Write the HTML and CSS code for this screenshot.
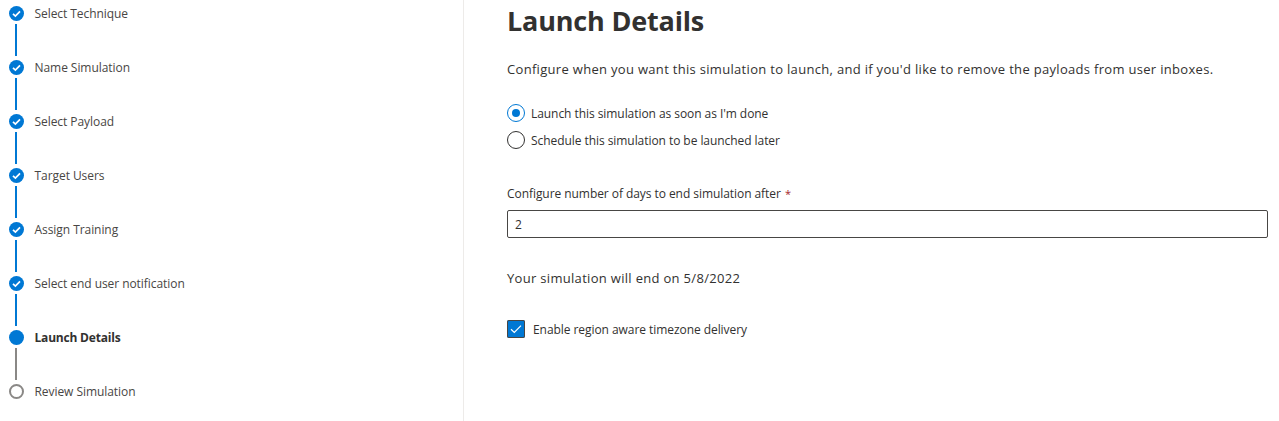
FILE: index.html
```html
<!DOCTYPE html>
<html lang="en">
<head>
<meta charset="utf-8">
<title>Launch Details</title>
<link rel="stylesheet" href="styles.css">
</head>
<body>
<div class="page">
  <nav class="steps">
    <div class="step done"><span class="dot"><svg viewBox="0 0 15 15" width="15" height="15"><path d="M4 7.8l2.4 2.3L11 5.3" fill="none" stroke="#fff" stroke-width="1.7"/></svg></span><span class="label">Select Technique</span></div>
    <div class="line"></div>
    <div class="step done"><span class="dot"><svg viewBox="0 0 15 15" width="15" height="15"><path d="M4 7.8l2.4 2.3L11 5.3" fill="none" stroke="#fff" stroke-width="1.7"/></svg></span><span class="label">Name Simulation</span></div>
    <div class="line"></div>
    <div class="step done"><span class="dot"><svg viewBox="0 0 15 15" width="15" height="15"><path d="M4 7.8l2.4 2.3L11 5.3" fill="none" stroke="#fff" stroke-width="1.7"/></svg></span><span class="label">Select Payload</span></div>
    <div class="line"></div>
    <div class="step done"><span class="dot"><svg viewBox="0 0 15 15" width="15" height="15"><path d="M4 7.8l2.4 2.3L11 5.3" fill="none" stroke="#fff" stroke-width="1.7"/></svg></span><span class="label">Target Users</span></div>
    <div class="line"></div>
    <div class="step done"><span class="dot"><svg viewBox="0 0 15 15" width="15" height="15"><path d="M4 7.8l2.4 2.3L11 5.3" fill="none" stroke="#fff" stroke-width="1.7"/></svg></span><span class="label">Assign Training</span></div>
    <div class="line"></div>
    <div class="step done"><span class="dot"><svg viewBox="0 0 15 15" width="15" height="15"><path d="M4 7.8l2.4 2.3L11 5.3" fill="none" stroke="#fff" stroke-width="1.7"/></svg></span><span class="label">Select end user notification</span></div>
    <div class="line"></div>
    <div class="step current"><span class="dot"></span><span class="label">Launch Details</span></div>
    <div class="line pending"></div>
    <div class="step todo"><span class="dot"></span><span class="label">Review Simulation</span></div>
  </nav>
  <main class="content">
    <h1 class="title">Launch Details</h1>
    <p class="intro">Configure when you want this simulation to launch, and if you'd like to remove the payloads from user inboxes.</p>
    <div class="radios">
      <div class="radio on"><span class="ring"></span><span>Launch this simulation as soon as I'm done</span></div>
      <div class="radio"><span class="ring"></span><span>Schedule this simulation to be launched later</span></div>
    </div>
    <div class="field-label">Configure number of days to end simulation after <span class="req">*</span></div>
    <div class="input">2</div>
    <p class="end">Your simulation will end on 5/8/2022</p>
    <div class="check"><span class="box"><svg viewBox="0 0 18 18" width="18" height="18"><path d="M4 9.3l3.3 3.2L14 5.6" fill="none" stroke="#fff" stroke-width="1.2"/></svg></span><span>Enable region aware timezone delivery</span></div>
  </main>
</div>
</body>
</html>
```
FILE: styles.css
```css
html, body { margin: 0; padding: 0; background: #fff; }
body { font-family: "Open Sans", "Noto Sans", sans-serif; color: #323130; font-size: 12px; letter-spacing: -0.06px; overflow: hidden; }
.page { display: flex; height: 421px; }
.steps { width: 464px; box-sizing: border-box; padding: 6px 0 0 9px; border-right: 1px solid #edebe9; flex: none; }
.step { display: flex; align-items: center; height: 15px; gap: 10.5px; }
.dot { width: 15px; height: 15px; border-radius: 50%; flex: none; box-sizing: border-box; display: block; }
.dot svg { display: block; }
.done .dot, .current .dot { background: #0078d4; }
.todo .dot { border: 2px solid #8a8886; background: #fff; }
.label { color: #484644; font-size: 12px; }
.current .label { font-weight: 700; color: #323130; letter-spacing: -0.2px; }
.line { width: 2px; height: 32px; margin: 3px 0 4px 6px; background: #0078d4; }
.line.pending { background: #8a8886; }
.content { flex: 1; padding: 0 11px 0 43px; min-width: 0; }
.title { margin: 0; font-size: 27px; line-height: 42px; font-weight: 700; color: #323130; letter-spacing: -0.18px; }
.intro { margin: 18px 0 0; font-size: 13px; line-height: 18px; letter-spacing: 0.31px; }
.radios { margin-top: 26px; display: flex; flex-direction: column; gap: 9px; }
.radio { display: flex; align-items: center; gap: 6px; height: 18px; }
.ring { width: 18px; height: 18px; border-radius: 50%; border: 1px solid #323130; box-sizing: border-box; flex: none; position: relative; }
.radio.on .ring { border-color: #0078d4; }
.radio.on .ring::after { content: ""; position: absolute; left: 4px; top: 4px; width: 8px; height: 8px; border-radius: 50%; background: #0078d4; }
.field-label { margin-top: 36px; line-height: 18px; }
.req { color: #a4262c; font-size: 11px; margin-left: 1px; }
.input { margin-top: 7px; height: 28px; box-sizing: border-box; border: 1px solid #484644; border-radius: 2px; padding: 0 7px; line-height: 28px; }
.end { margin: 31px 0 0; font-size: 13px; line-height: 18px; letter-spacing: 0.31px; }
.check { margin-top: 33px; display: flex; align-items: center; gap: 8px; height: 18px; }
.box { width: 18px; height: 18px; border-radius: 2px; background: #0078d4; flex: none; box-shadow: inset 0 0 0 1px #484644; }
.box svg { display: block; }
```
